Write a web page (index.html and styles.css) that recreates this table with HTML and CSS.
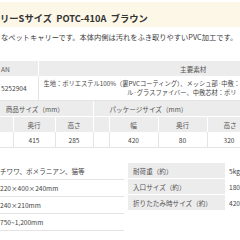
FILE: index.html
```html
<!DOCTYPE html>
<html lang="ja">
<head>
<meta charset="utf-8">
<link rel="stylesheet" href="styles.css">
</head>
<body>
<div class="page">
  <div class="titlebar"><h1 class="title">リーSサイズ&nbsp; POTC-410A&nbsp; ブラウン</h1></div>
  <p class="desc">なペットキャリーです。本体内側は汚れをふき取りやすいPVC加工です。</p>

  <table class="spec t1">
    <colgroup><col class="c-jan"><col class="c-mat"></colgroup>
    <tr><th class="jan">AN</th><th class="mat-h">主要素材</th></tr>
    <tr class="tall">
      <td class="jan">5252904</td>
      <td class="mat"><span class="ln">生地：ポリエステル100%（裏PVCコーティング）、メッシュ部·中敷：</span><span class="ln ln2">ル·グラスファイバー、中敷芯材：ポリ</span></td>
    </tr>
  </table>

  <table class="spec t2">
    <colgroup><col class="a"><col class="b"><col class="c"><col class="d"><col class="e"><col class="f"><col class="g"></colgroup>
    <tr><th colspan="3" class="grp1">商品サイズ（mm）</th><th colspan="4" class="grp2">パッケージサイズ（mm）</th></tr>
    <tr><th></th><th>奥行</th><th>高さ</th><th></th><th>幅</th><th>奥行</th><th>高さ</th></tr>
    <tr><td></td><td>415</td><td>285</td><td></td><td>420</td><td>80</td><td>320</td></tr>
  </table>

  <div class="lower">
    <table class="list">
      <tr><td>チワワ、ポメラニアン、猫等</td></tr>
      <tr><td>220×400×240mm</td></tr>
      <tr><td>240×210mm</td></tr>
      <tr><td>750~1,200mm</td></tr>
    </table>
    <table class="kv">
      <tr><th>耐荷重（約）</th><td>5kg</td></tr>
      <tr><th>入口サイズ（約）</th><td>180</td></tr>
      <tr><th>折りたたみ時サイズ（約）</th><td>420</td></tr>
    </table>
  </div>
</div>
</body>
</html>
```

FILE: styles.css
```css
html, body {
  margin: 0;
  padding: 0;
  background: #ffffff;
  overflow: hidden;
}

body {
  font-family: "Noto Sans CJK JP", "Noto Sans", sans-serif;
  color: #3a3a3a;
}

.page {
  width: 240px;
  overflow: hidden;
}

.titlebar {
  margin-top: 2px;
  background: #fcf7e7;
  padding: 11px 0 4px 0;
}

.title {
  margin: 0;
  font-size: 9.3px;
  line-height: 10px;
  font-weight: bold;
  color: #333333;
  white-space: nowrap;
}

.desc {
  margin: 5.5px 0 0 1px;
  font-size: 7.25px;
  line-height: 9px;
  white-space: nowrap;
}

.spec {
  border-collapse: collapse;
  table-layout: fixed;
  font-size: 6.6px;
  color: #444444;
  width: 240px;
}

.t1 { margin-top: 19.5px; }

.spec th {
  background: #ececec;
  font-weight: normal;
  color: #555555;
  height: 15px;
  padding: 0;
  border-left: 1px solid #ffffff;
  text-align: center;
  white-space: nowrap;
}

.spec td {
  padding: 0;
  text-align: center;
  border-left: 1px solid #e4e4e4;
  border-bottom: 1px solid #e4e4e4;
  height: 15px;
  white-space: nowrap;
}

.spec tr > :first-child { border-left: 0; }

.c-jan { width: 38px; }

.spec .jan {
  text-align: left;
  padding-left: 1px;
}

.spec .mat-h {
  padding-left: 108px;
}

.tall td { height: 24px; }

.mat {
  text-align: left;
  font-size: 6.25px;
}

.mat .ln {
  display: block;
  line-height: 9px;
  padding-left: 5px;
}

.mat .ln2 { padding-left: 85px; }

.t2 .a { width: 13px; }
.t2 .b { width: 42px; }
.t2 .c { width: 38px; }
.t2 .d { width: 16px; }
.t2 .e { width: 49px; }
.t2 .f { width: 49px; }
.t2 .g { width: 33px; }

.t2 .grp1 { padding-left: 0; padding-right: 23px; }
.t2 .grp2 { padding-left: 20px; }
.t2 tr + tr th { border-top: 1px solid #ffffff; }
.t2 tr > :last-child { text-align: left; padding-left: 16px; }

.lower {
  margin-top: 15px;
  display: flex;
  gap: 4px;
  align-items: flex-start;
}

.list, .kv {
  border-collapse: collapse;
  font-size: 6.6px;
  color: #444444;
}

.list { width: 124px; }

.list td {
  padding: 0;
  height: 16px;
  border-bottom: 1px solid #e4e4e4;
  white-space: nowrap;
}

.kv { width: 112px; }

.kv th {
  font-weight: normal;
  text-align: left;
  background: #ececec;
  color: #555555;
  padding: 0 0 0 5px;
  width: 92px;
  height: 15px;
  border-bottom: 1px solid #ffffff;
  white-space: nowrap;
}

.kv td {
  padding: 0 0 0 4px;
  white-space: nowrap;
}
```
